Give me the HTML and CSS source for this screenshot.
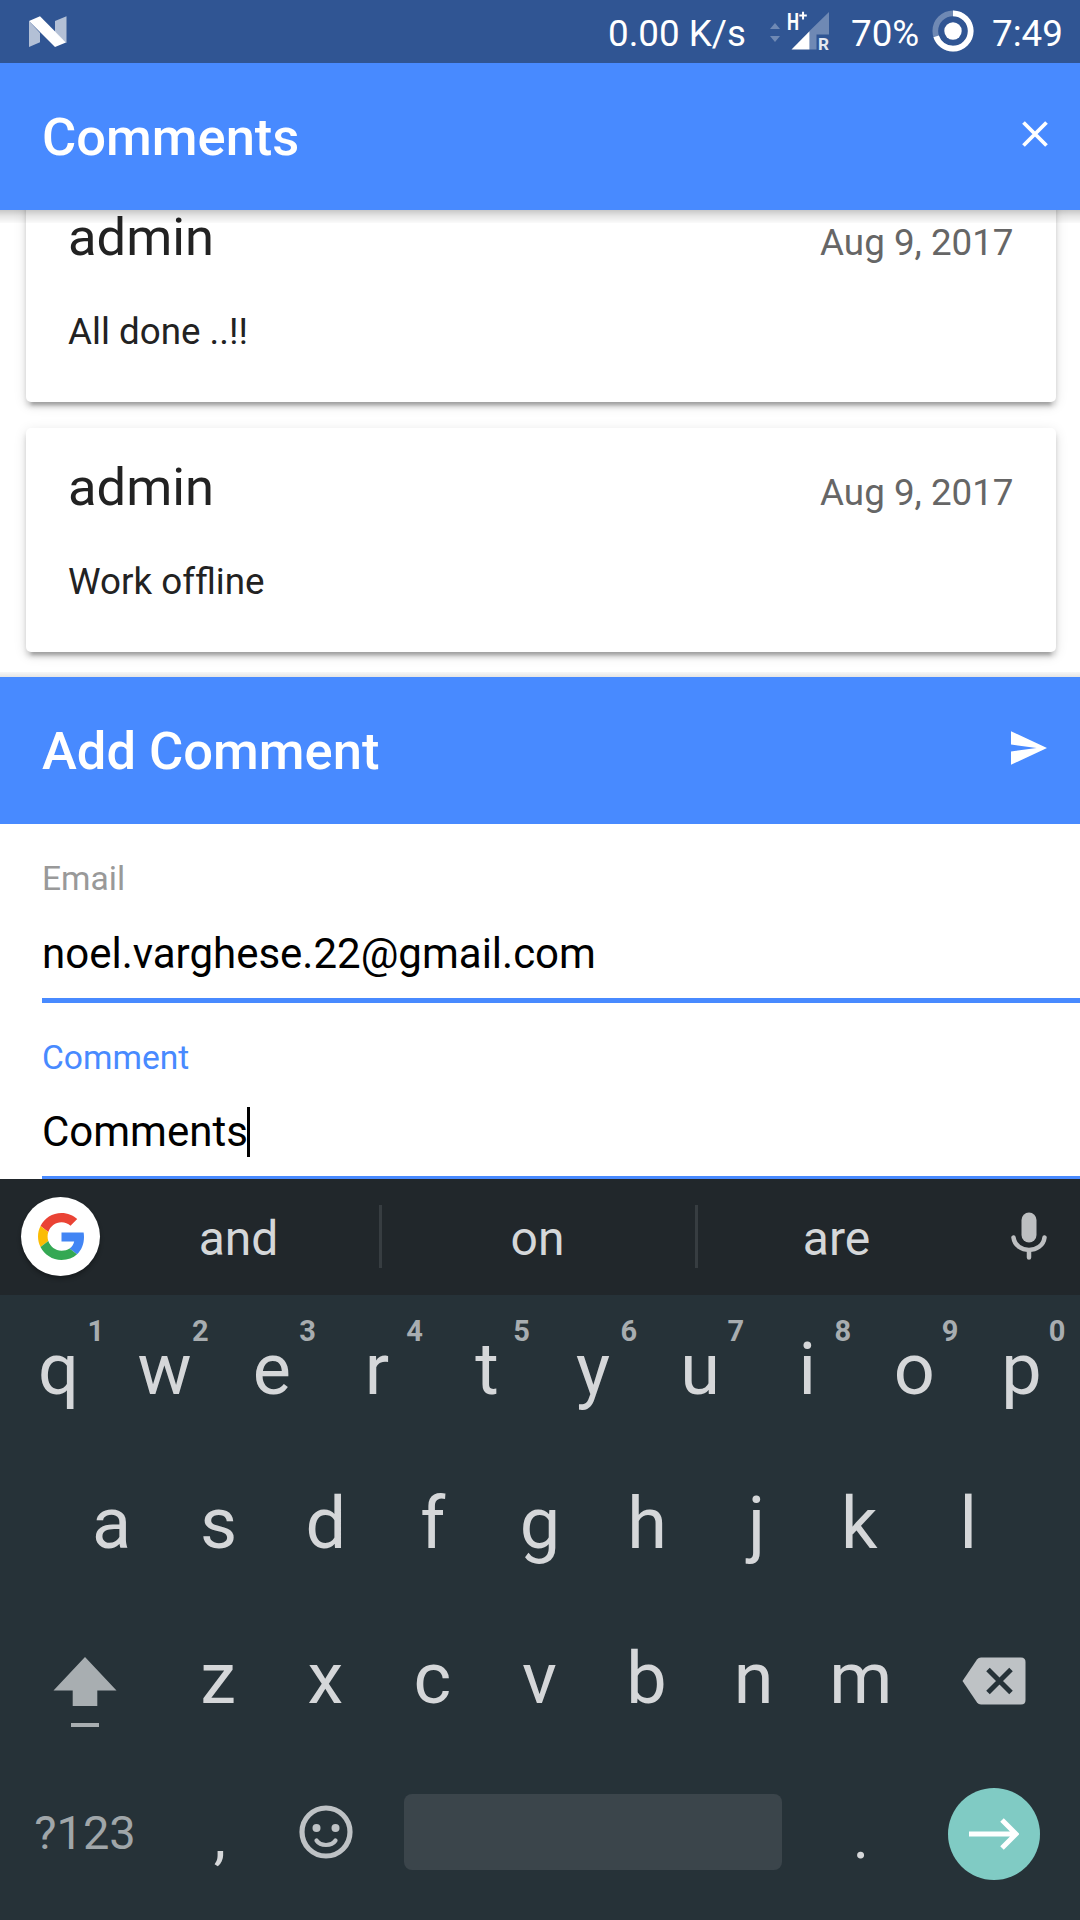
FILE: index.html
```html
<!DOCTYPE html>
<html lang="en">
<head>
<meta charset="utf-8">
<title>Comments</title>
<link rel="stylesheet" href="styles.css">
</head>
<body>
<div class="screen">
  <div class="status">
    <svg class="status-logo" viewBox="0 0 40 32" width="40" height="32">
      <path d="M1 5 12 17V26.300L1 31ZM27 5 38.500 .3V27L27 16Z" fill="#b3c0d6"/>
      <path d="M1 5 12 .3 38 26.500 27 31Z" fill="#fff"/>
    </svg>
    <span class="speed">0.00 K/s</span>
    <svg class="signal" viewBox="0 0 62 42" width="62" height="42">
      <path d="M2 18 7 12 12 18ZM2 25 7 31 12 25Z" fill="#6f89b4"/>
      <path d="M41.500 20 61 1V23.500H48.500V38.500H41.500Z" fill="#6f89b4"/>
      <path d="M23.500 38.500 41.500 20.300V38.500Z" fill="#fff"/>
      <text class="net" x="19" y="19" textLength="12" lengthAdjust="spacingAndGlyphs">H</text>
      <path d="M31.300 4.600H38.800M35.050 .8V8.400" stroke="#fff" stroke-width="2"/>
      <text class="roam" x="50" y="38.500" textLength="11" lengthAdjust="spacingAndGlyphs">R</text>
    </svg>
    <span class="percent">70%</span>
    <svg class="battery" viewBox="0 0 42 42" width="42" height="42">
      <circle cx="21" cy="21" r="17.700" fill="none" stroke="#6f89b4" stroke-width="5.700"/>
      <circle cx="21" cy="21" r="17.700" fill="none" stroke="#fff" stroke-width="5.700" pathLength="100" stroke-dasharray="70 30" transform="rotate(-90 21 21)"/>
      <circle cx="21" cy="21" r="8.700" fill="#fff"/>
    </svg>
    <span class="clock">7:49</span>
  </div>

  <header class="toolbar header">
    <h1 class="title">Comments</h1>
    <svg class="close" viewBox="0 0 28 28" width="28" height="28"><path d="M2.500 2.500 25.500 25.500M25.500 2.500 2.500 25.500" stroke="#fff" stroke-width="3.800"/></svg>
  </header>

  <main class="content">
    <article class="card">
      <div class="card-head"><h2 class="author">admin</h2><span class="date">Aug 9, 2017</span></div>
      <p class="message">All done ..!!</p>
    </article>
    <article class="card">
      <div class="card-head"><h2 class="author">admin</h2><span class="date">Aug 9, 2017</span></div>
      <p class="message">Work of&zwnj;fline</p>
    </article>
  </main>

  <section class="toolbar footer">
    <h1 class="title">Add Comment</h1>
    <svg class="send" viewBox="0 0 36 34" width="36" height="34"><path d="M0 .3 36 17 0 33.700V20.500L25.500 17 0 13.500Z" fill="#fff"/></svg>
  </section>

  <form class="form">
    <div class="field">
      <label class="label">Email</label>
      <div class="value">noel.varghese.22@gmail.com</div>
    </div>
    <div class="field">
      <label class="label label-active">Comment</label>
      <div class="value">Comments<i class="caret"></i></div>
    </div>
  </form>

  <div class="keyboard">
    <div class="suggest">
      <div class="google">
        <svg viewBox="0 0 48 48" width="47" height="47">
          <path fill="#ea4335" d="M24 9.500c3.540 0 6.710 1.220 9.210 3.600l6.850-6.850C35.900 2.380 30.470 0 24 0 14.620 0 6.510 5.380 2.560 13.220l7.980 6.190C12.430 13.720 17.740 9.500 24 9.500z"/>
          <path fill="#4285f4" d="M46.980 24.550c0-1.570-.15-3.090-.38-4.550H24v9.020h12.940c-.58 2.960-2.260 5.480-4.780 7.180l7.730 6c4.510-4.180 7.090-10.360 7.090-17.650z"/>
          <path fill="#fbbc05" d="M10.530 28.590c-.48-1.450-.76-2.990-.76-4.590s.27-3.140.76-4.590l-7.980-6.190C.92 16.460 0 20.120 0 24c0 3.880.92 7.540 2.560 10.780l7.970-6.190z"/>
          <path fill="#34a853" d="M24 48c6.480 0 11.930-2.130 15.890-5.810l-7.730-6c-2.150 1.450-4.920 2.300-8.160 2.300-6.260 0-11.570-4.220-13.470-9.910l-7.980 6.190C6.510 42.620 14.620 48 24 48z"/>
        </svg>
      </div>
      <span class="word word-side">and</span>
      <span class="divider"></span>
      <span class="word word-middle">on</span>
      <span class="divider"></span>
      <span class="word word-side word-last">are</span>
      <svg class="mic" viewBox="0 0 36 48" width="36" height="48">
        <rect x="10.500" y=".5" width="15" height="30" rx="7.500" fill="#bdbfc1"/>
        <path d="M2.500 25.500C4.500 42 31.500 42 33.500 25.500M18 39V45.500" fill="none" stroke="#bdbfc1" stroke-width="4.500" stroke-linecap="round"/>
      </svg>
    </div>

    <div class="row">
      <span class="key key-right">q<sup class="hint hint-one">1</sup></span><span class="key">w<sup class="hint">2</sup></span><span class="key">e<sup class="hint">3</sup></span><span class="key key-left">r<sup class="hint">4</sup></span><span class="key key-right">t<sup class="hint">5</sup></span><span class="key">y<sup class="hint">6</sup></span><span class="key">u<sup class="hint">7</sup></span><span class="key">i<sup class="hint">8</sup></span><span class="key">o<sup class="hint">9</sup></span><span class="key">p<sup class="hint">0</sup></span>
    </div>
    <div class="row row-inset">
      <span class="key">a</span><span class="key">s</span><span class="key">d</span><span class="key">f</span><span class="key">g</span><span class="key">h</span><span class="key key-j">j</span><span class="key key-left">k</span><span class="key">l</span>
    </div>
    <div class="row">
      <span class="key key-wide">
        <svg class="shift" viewBox="0 0 64 72" width="64" height="72"><path d="M32 0 63.500 33.500H44.300V49H19.700V33.500H.5ZM18 66H46V70H18Z" fill="#a8aeb1"/></svg>
      </span>
      <span class="key">z</span><span class="key">x</span><span class="key">c</span><span class="key">v</span><span class="key">b</span><span class="key">n</span><span class="key">m</span>
      <span class="key key-wide">
        <svg class="backspace" viewBox="0 0 64 48" width="64" height="48">
          <path d="M19 .5H59Q63.500 .5 63.500 5V43Q63.500 47.500 59 47.500H19Q16.500 47.500 15 45.500L.5 24 15 2.500Q16.500 .5 19 .5Z" fill="#bec2c5"/>
          <path d="M26 12.500 49 35.500M49 12.500 26 35.500" stroke="#263238" stroke-width="5"/>
        </svg>
      </span>
    </div>
    <div class="row row-last">
      <span class="key key-wide symbols">?123</span>
      <span class="key punct">,</span>
      <span class="key">
        <svg class="emoji" viewBox="0 0 54 54" width="54" height="54">
          <circle cx="27" cy="27" r="24" fill="none" stroke="#bec2c5" stroke-width="5.200"/>
          <circle cx="17.500" cy="23" r="4" fill="#bec2c5"/><circle cx="36.500" cy="23" r="4" fill="#bec2c5"/>
          <path d="M17.500 35.500C21.500 41.500 32.500 41.500 36.500 35.500" fill="none" stroke="#bec2c5" stroke-width="4.200" stroke-linecap="round"/>
        </svg>
      </span>
      <span class="space"></span>
      <span class="key punct">.</span>
      <span class="key key-wide">
        <span class="enter"><svg viewBox="0 0 50 32" width="50" height="32"><path d="M0 16H47M33 2 47 16 33 30" fill="none" stroke="#fff" stroke-width="5"/></svg></span>
      </span>
    </div>
  </div>
</div>
</body>
</html>
```
FILE: styles.css
```css
* { box-sizing: border-box; }
body { margin: 0; font-family: Roboto, sans-serif; }
h1, h2, p { margin: 0; font-weight: 400; }
svg { display: block; flex: none; }

.screen {
  width: 1080px;
  height: 1920px;
  display: flex;
  flex-direction: column;
  overflow: hidden;
  background: #fff;
}

/* Status bar */
.status {
  flex: none;
  height: 63px;
  display: flex;
  align-items: flex-start;
  padding-left: 28px;
  background: #305593;
  color: #fff;
  font-size: 36.75px;
  line-height: 43px;
}
.status span { padding-top: 12px; white-space: nowrap; }
.status-logo { margin-top: 16px; }
.speed { margin-left: 540px; width: 140px; }
.signal { margin: 11px 0 0 20px; overflow: visible; }
.net { font-size: 24px; font-weight: 700; fill: #fff; }
.roam { font-size: 16.5px; font-weight: 700; fill: #e3e8f0; }
.percent { margin-left: 21px; width: 69px; }
.battery { margin: 10px 0 0 12px; }
.clock { margin-left: 18px; }

/* Toolbars */
.toolbar {
  flex: none;
  height: 147px;
  position: relative;
  z-index: 1;
  display: flex;
  align-items: center;
  justify-content: space-between;
  padding: 0 33px 0 42px;
  background: #488aff;
  color: #fff;
}
.toolbar::after { content: ""; position: absolute; left: 0; right: 0; }
.header::after {
  top: 100%;
  height: 13px;
  background: linear-gradient(rgba(0,0,0,.22), rgba(0,0,0,.1) 45%, rgba(0,0,0,.02));
}
.footer::after {
  bottom: 100%;
  height: 5px;
  background: linear-gradient(rgba(0,0,0,.03), rgba(0,0,0,.1));
}
.title { font-size: 52.5px; font-weight: 500; line-height: 62px; }
.close { margin: 0 -2px 6px 0; }
.send { margin-bottom: 5px; }

/* Comment list, scrolled to its end */
.content {
  flex: none;
  height: 467px;
  display: flex;
  flex-direction: column;
  justify-content: flex-end;
  gap: 26px;
  padding: 0 24.500px 25px 26px;
  overflow: hidden;
}
.card {
  flex: none;
  height: 224px;
  padding: 34px 42px 0;
  border-radius: 5px;
  background: #fff;
  box-shadow: 0 5px 5px rgba(0,0,0,.14), 0 8px 3px -5px rgba(0,0,0,.2), 0 3px 13px rgba(0,0,0,.12);
  color: #222;
}
.card-head { display: flex; justify-content: space-between; align-items: baseline; }
.author { font-size: 52.5px; line-height: 50px; }
.date { color: #666; font-size: 36.75px; line-height: 43px; }
.message { margin-top: 46px; font-size: 36.75px; line-height: 43px; }

/* Form */
.form { flex: none; height: 355px; overflow: hidden; }
.field {
  height: 178.5px;
  margin-left: 42px;
  padding-top: 35.3px;
  border-bottom: 5.25px solid #488aff;
}
.label { display: block; color: #999; font-size: 33.6px; line-height: 40px; }
.label-active { color: #488aff; }
.value { display: flex; align-items: center; margin-top: 29.7px; height: 50px; color: #000; font-size: 42px; line-height: 50px; }
.caret { width: 3px; height: 50px; margin-left: -1px; background: #000; }

/* Keyboard */
.keyboard { flex: 1; background: #263238; color: #d5d7d9; }
.suggest {
  height: 116px;
  display: flex;
  align-items: center;
  padding: 0 0 2px 21px;
  background: #21272b;
  font-size: 48px;
}
.google {
  width: 79px;
  height: 79px;
  flex: none;
  display: flex;
  align-items: center;
  justify-content: center;
  margin-right: -2px;
  padding-left: 1px;
  border-radius: 50%;
  background: #fff;
  box-shadow: 0 3px 4px rgba(0,0,0,.3);
}
.word { width: 313px; text-align: center; line-height: 56px; padding-top: 6px; }
.word-side { width: 281px; }
.word-middle { padding-right: 2px; }
.word-last { padding-right: 4px; }
.divider { width: 3px; height: 63px; background: #373d41; }
.mic { margin-left: 32px; }
.row { height: 154.5px; display: flex; padding: 0 4px; }
.row-inset { padding: 0 58px; }
.key {
  position: relative;
  flex: 0 0 107.1px;
  display: flex;
  justify-content: center;
  padding-top: 33px;
  font-size: 72px;
  line-height: 84px;
}
.row-inset .key { padding-top: 32.500px; }
.key-left { padding-right: 4px; }
.key-right { padding-left: 2px; }
.key-j { padding-left: 5px; }
.hint {
  position: absolute;
  top: 19px;
  right: 9.5px;
  color: #a8adb0;
  font-size: 29px;
  font-weight: 700;
  line-height: 34px;
}
.hint-one { right: 7px; }
.key-wide { flex: 0 0 160.6px; }
.shift { margin: 20px 0 0 1px; }
.backspace { margin: 20px 0 0 -2px; }
.row-last { padding: 0 4.700px; }
.row-last .key { padding-top: 31px; }
.row-last .symbols { padding-top: 46px; color: #a0a6a9; font-size: 47px; line-height: 56px; }
.row-last .punct { padding: 36px 0 0 2px; font-size: 62px; }
.emoji { margin-top: 15px; }
.space { flex: none; width: 378px; height: 76px; margin: 35px 24.500px 0; border-radius: 8px; background: #3b454b; }
.enter {
  flex: none;
  width: 92px;
  height: 92px;
  display: flex;
  align-items: center;
  justify-content: center;
  margin-top: -1.5px;
  border-radius: 50%;
  background: #80cbc4;
}
```
